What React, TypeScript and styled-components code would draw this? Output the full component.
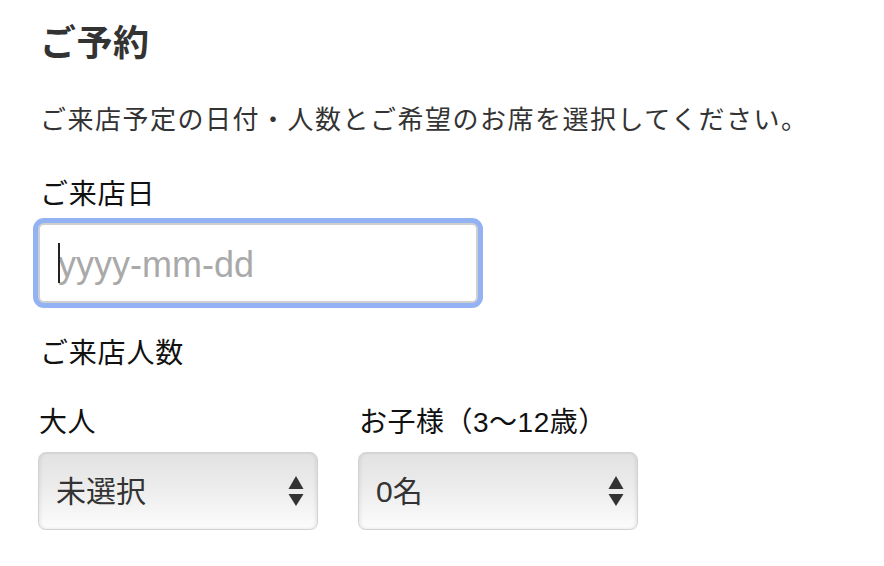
import React from "react";
import styled, { createGlobalStyle } from "styled-components";

const GlobalStyle = createGlobalStyle`
  html, body {
    margin: 0;
    padding: 0;
    background: #ffffff;
  }
  body {
    font-family: "Liberation Sans", "Noto Sans CJK JP", "Noto Sans", sans-serif;
    color: #111;
  }
`;

const Page = styled.main`
  display: flex;
  flex-direction: column;
  padding: 22px 38px 0 38px;
`;

const Title = styled.h1`
  margin: 0;
  font-size: 36px;
  line-height: 44px;
  font-weight: 700;
  color: #333;
  padding-left: 2px;
  letter-spacing: 0.5px;
`;

const Lead = styled.p`
  margin: 36px 0 0 0;
  font-size: 26px;
  line-height: 36px;
  letter-spacing: 1.5px;
  color: #333;
  padding-left: 2px;
`;

const Label = styled.label<{ $top: number }>`
  display: block;
  margin-top: ${(p) => p.$top}px;
  font-size: 28px;
  line-height: 36px;
  letter-spacing: 0.8px;
  color: #111;
  padding-left: 2px;
`;

const InputWrap = styled.div`
  position: relative;
  margin-top: 10px;
  width: 440px;
`;

const DateInput = styled.input`
  box-sizing: border-box;
  width: 440px;
  height: 80px;
  margin: 0;
  padding: 4px 16px 0 18px;
  border: 2px solid #cfcfcf;
  border-radius: 6px;
  background: #fff;
  font-family: "Liberation Sans", Arial, sans-serif;
  font-size: 36px;
  color: #222;
  box-shadow: 0 0 0 5px #93b2f4;
  outline: none;
  caret-color: transparent;
  &::placeholder {
    color: #a9a9a9;
  }
`;

const Caret = styled.span`
  position: absolute;
  left: 20px;
  top: 20px;
  width: 2px;
  height: 40px;
  background: #222;
`;

const Row = styled.div`
  display: grid;
  grid-template-columns: 280px 280px;
  column-gap: 40px;
  margin-top: 33px;
`;

const Field = styled.div`
  display: flex;
  flex-direction: column;
`;

const FieldLabel = styled.label`
  font-size: 28px;
  line-height: 36px;
  letter-spacing: 0.5px;
  color: #111;
  padding-left: 1px;
`;

const SelectWrap = styled.div`
  position: relative;
  margin-top: 11px;
`;

const Select = styled.select`
  box-sizing: border-box;
  width: 280px;
  height: 78px;
  margin: 0;
  padding: 0 40px 0 17px;
  appearance: none;
  -webkit-appearance: none;
  border: 1px solid #d2d2d2;
  border-radius: 8px;
  background: linear-gradient(#e2e2e2 0%, #ececec 45%, #fcfcfc 100%);
  box-shadow: inset 2px 0 3px rgba(0, 0, 0, 0.06),
    inset -2px 0 3px rgba(0, 0, 0, 0.06), 0 1px 1px rgba(0, 0, 0, 0.05);
  font-family: "Liberation Sans", "Noto Sans CJK JP", "Noto Sans", sans-serif;
  font-size: 30px;
  color: #333;
  outline: none;
`;

const Arrows = styled.svg`
  position: absolute;
  right: 14px;
  top: 24px;
  pointer-events: none;
`;

const Updown = () => (
  <Arrows width="16" height="31" viewBox="0 0 16 31">
    <polygon points="8,0 15.5,13 0.5,13" fill="#333" />
    <polygon points="0.5,18 15.5,18 8,30" fill="#333" />
  </Arrows>
);

export default function App() {
  return (
    <>
      <GlobalStyle />
      <Page>
        <Title>ご予約</Title>
        <Lead>ご来店予定の日付・人数とご希望のお席を選択してください。</Lead>
        <Label $top={39} htmlFor="date">ご来店日</Label>
        <InputWrap>
          <DateInput id="date" type="text" placeholder="yyyy-mm-dd" />
          <Caret />
        </InputWrap>
        <Label $top={33}>ご来店人数</Label>
        <Row>
          <Field>
            <FieldLabel htmlFor="adult">大人</FieldLabel>
            <SelectWrap>
              <Select id="adult" defaultValue="">
                <option value="">未選択</option>
                <option value="1">1名</option>
                <option value="2">2名</option>
              </Select>
              <Updown />
            </SelectWrap>
          </Field>
          <Field>
            <FieldLabel htmlFor="child">お子様（3〜12歳）</FieldLabel>
            <SelectWrap>
              <Select id="child" defaultValue="0">
                <option value="0">0名</option>
                <option value="1">1名</option>
                <option value="2">2名</option>
              </Select>
              <Updown />
            </SelectWrap>
          </Field>
        </Row>
      </Page>
    </>
  );
}
